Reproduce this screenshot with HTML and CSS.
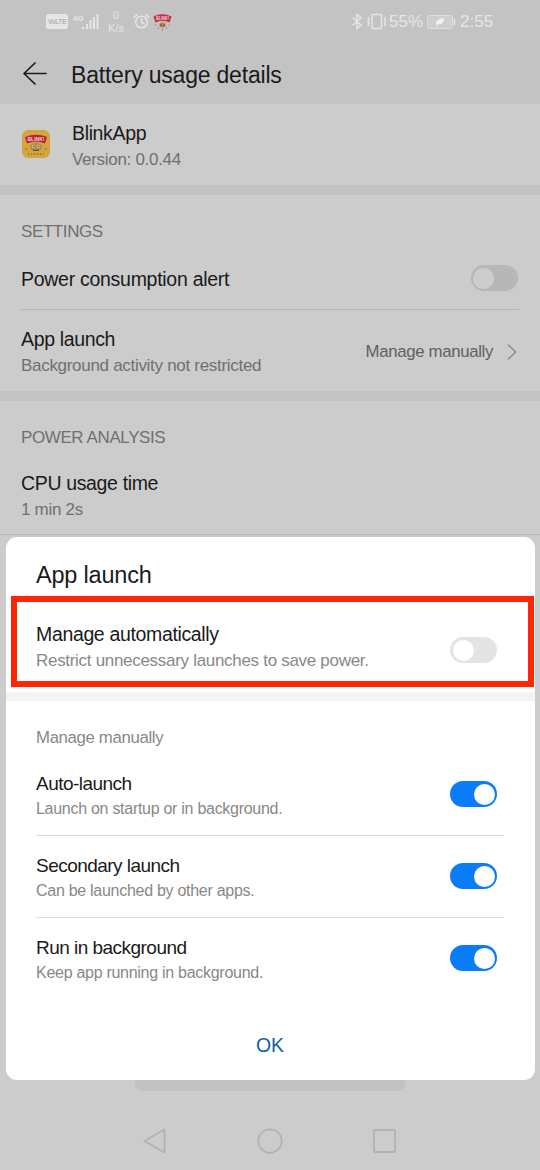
FILE: index.html
```html
<!DOCTYPE html>
<html lang="en">
<head>
<meta charset="utf-8">
<title>Battery usage details</title>
<link rel="stylesheet" href="styles.css">
</head>
<body>
<div class="screen">
  <header class="top">
    <div class="status">
      <div class="volte"><span>VoLTE</span></div>
      <svg class="signal" width="27" height="18" viewBox="0 0 27 18"><text x="0" y="7.5">4G</text><g fill="#e6e6e6"><rect x="9" y="14" width="2" height="2"/><rect x="13" y="11" width="2" height="5"/><rect x="16.500" y="7" width="2" height="9"/><rect x="20" y="4" width="2" height="12"/><rect x="23.500" y="1" width="2" height="15"/></g></svg>
      <div class="speed"><span>0</span><span>K/s</span></div>
      <svg class="alarm" width="17" height="17" viewBox="0 0 17 17" fill="none" stroke="#e6e6e6" stroke-width="1.500" stroke-linecap="round"><circle cx="8.500" cy="9" r="5.800"/><path d="M8.500 5.800V9.500L11 10.700M1.200 4.200L4 1.500M13 1.500L15.800 4.200"/></svg>
      <svg class="blink" width="19" height="18" viewBox="0 0 19 18"><path d="M0.500 3.500Q9.500-1 18.500 3.500L16.500 9.500Q9.500 6 2.500 9.500Z" fill="#c32b48"/><text class="brand" x="9.500" y="6.500" text-anchor="middle" textLength="13" lengthAdjust="spacingAndGlyphs">BLINK!</text><path d="M6.500 10.500Q9.500 8 12.500 10.500V13.500Q9.500 16 6.500 13.500Z" fill="#b88b55"/><path d="M8 11.500v1.500M11 11.500v1.500" stroke="#5b3a32" stroke-width="1.300"/><path d="M2 11.500l1 1M16 12.500l1-1M5 15l1 .5M13 15.500l1-.5M9 16.800h1" stroke="#655d5d"/></svg>
      <span class="grow"></span>
      <svg class="bt" width="12" height="17" viewBox="0 0 12 17" fill="none" stroke="#e6e6e6" stroke-width="1.500"><path d="M1.500 4.500L10 12L6 15.500V1.500L10 5L1.500 12.500"/></svg>
      <svg class="vib" width="20" height="17" viewBox="0 0 20 17" fill="none" stroke="#e6e6e6" stroke-width="1.500"><rect x="5" y="1.500" width="9.500" height="14" rx="1"/><path d="M1 4l1 2-1 2 1 2-1 3M18.500 4l-1 2 1 2-1 2 1 3"/></svg>
      <span class="stat pct">55%</span>
      <svg class="bat" width="29" height="14" viewBox="0 0 29 14"><rect x=".5" y=".5" width="25" height="13" rx="2" fill="#cecece" stroke="#dedede"/><path d="M9 10Q8 4 17 3Q17 10 10.500 9.500L9 12Z" fill="#f0f0f0"/><path d="M27.500 4v6" stroke="#e6e6e6" stroke-width="1.500"/></svg>
      <span class="stat clock">2:55</span>
    </div>
    <div class="appbar">
      <svg width="26" height="26" viewBox="0 0 26 26" fill="none" stroke="#1b1b1b" stroke-width="1.700" stroke-linecap="round" stroke-linejoin="round"><path d="M24 12.500H2M13 2L2 12.500L13 23"/></svg>
      <h1>Battery usage details</h1>
    </div>
  </header>

  <section class="app">
    <svg width="28" height="28" viewBox="0 0 28 28"><rect width="28" height="28" rx="6" fill="#d2a63d"/><path d="M3 7Q14 2.500 25 7L23 13.500Q14 9.500 5 13.500Z" fill="#bc2034"/><text class="brand big" x="14" y="10.500" text-anchor="middle" textLength="17" lengthAdjust="spacingAndGlyphs">BLINK!</text><path d="M8.500 15Q14 10.500 19.500 15V19Q14 23 8.500 19Z" fill="#ad8a49"/><circle cx="11.500" cy="16.500" r="1.700" fill="#d0bd92"/><circle cx="16.500" cy="16.500" r="1.700" fill="#d0bd92"/><path d="M11 16.500h1.500M16 16.500h1.500M11 20Q14 21 17 20" fill="none" stroke="#69502c" stroke-width="1.200"/><path d="M3 18l2 2M25 18l-2 2" stroke="#967225"/><path d="M6 24h16" stroke="#987524" stroke-width="1.300" stroke-dasharray="1.500 1.500"/></svg>
    <div class="pair"><b>BlinkApp</b><span>Version: 0.0.44</span></div>
  </section>

  <section class="settings">
    <h2>SETTINGS</h2>
    <div class="row alert"><b>Power consumption alert</b><i class="switch dim"></i></div>
    <div class="row launch">
      <div class="pair"><b>App launch</b><span>Background activity not restricted</span></div>
      <div class="value"><span>Manage manually</span><svg width="10" height="18" viewBox="0 0 10 18" fill="none" stroke="#8c8c8c" stroke-width="1.500"><path d="M1 1.500L8.500 9L1 16.500"/></svg></div>
    </div>
  </section>

  <section class="analysis">
    <h2>POWER ANALYSIS</h2>
    <div class="pair cpu"><b>CPU usage time</b><span>1 min 2s</span></div>
  </section>

  <footer class="bottom">
    <div class="tab"></div>
    <svg class="nav" width="540" height="30" viewBox="0 0 540 30" fill="none" stroke="#b2b2b2" stroke-width="1.800" stroke-linejoin="round"><path d="M164.500 3.500V26.500L144.500 15Z"/><circle cx="270" cy="15" r="11.700"/><rect x="374" y="4" width="21" height="22" rx="1"/></svg>
  </footer>

  <div class="dialog">
    <h3>App launch</h3>
    <div class="item auto"><div class="pair"><b>Manage automatically</b><span>Restrict unnecessary launches to save power.</span></div><i class="switch"></i></div>
    <div class="band"></div>
    <p class="group">Manage manually</p>
    <div class="item opt"><div class="pair"><b>Auto-launch</b><span>Launch on startup or in background.</span></div><i class="switch on"></i></div>
    <div class="item opt"><div class="pair"><b>Secondary launch</b><span>Can be launched by other apps.</span></div><i class="switch on"></i></div>
    <div class="item opt last"><div class="pair"><b>Run in background</b><span>Keep app running in background.</span></div><i class="switch on"></i></div>
    <div class="ok">OK</div>
  </div>
  <div class="highlight"></div>
</div>
</body>
</html>
```
FILE: styles.css
```css
* { box-sizing: border-box; }
body { margin: 0; font-family: "Liberation Sans", Arial, sans-serif; }
h1, h2, h3, p { margin: 0; font-weight: 400; }
b { font-weight: 400; }
svg { display: block; flex: none; }

.screen { position: relative; width: 540px; height: 1170px; overflow: hidden; background: #ccc; display: flex; flex-direction: column; color: #1a1a1a; }

.top { height: 104px; background: #c3c3c3; }
.status { height: 43px; display: flex; align-items: center; padding: 0 46px; color: #e6e6e6; }
.volte { width: 22px; height: 15px; border-radius: 2.5px; background: #e6e6e6; color: #b4b4b4; display: flex; align-items: center; justify-content: center; font-size: 7px; line-height: 11px; font-weight: 700; letter-spacing: -.5px; }
.signal { margin-left: 5px; }
.signal text { font-size: 8px; font-weight: 700; fill: #e6e6e6; }
.speed { width: 22px; margin-left: 5px; display: flex; flex-direction: column; align-items: center; font-size: 11px; line-height: 13px; }
.alarm { margin-left: 6px; }
.blink { margin-left: 3px; }
.brand { font-size: 4.5px; font-weight: 700; fill: #efd5d8; }
.brand.big { font-size: 6px; }
.grow { flex: 1; }
.vib { margin-left: 4px; }
.stat { font-size: 17px; line-height: 20px; white-space: nowrap; }
.pct { width: 35px; margin-left: 2px; }
.bat { margin-left: 3px; }
.clock { width: 34px; margin-left: 4px; }
.appbar { display: flex; align-items: center; gap: 23px; height: 62px; padding: 0 0 0 22px; }
.appbar h1 { font-size: 23px; line-height: 30px; letter-spacing: -.2px; padding-top: 1px; }

.app { height: 81px; padding: 16px 0 0 22px; display: flex; gap: 22px; }
.app svg { margin-top: 10px; }
.pair { display: flex; flex-direction: column; white-space: nowrap; }
.pair b { font-size: 19.5px; line-height: 26px; letter-spacing: -.35px; }
.pair span { font-size: 17px; line-height: 27px; letter-spacing: -.3px; color: #707070; }

.settings { height: 216px; padding: 0 21px 0 21px; border-top: 10px solid #c3c3c3; border-bottom: 10px solid #c3c3c3; }
h2 { font-size: 17px; line-height: 25px; letter-spacing: -.4px; color: #707070; padding-top: 24px; }
.row { display: flex; justify-content: space-between; }
.alert { height: 66px; align-items: center; padding: 3px 1.5px 0 0; border-bottom: 1px solid #b5b5b5; }
.alert b { font-size: 19.5px; line-height: 26px; letter-spacing: -.28px; padding-top: 2px; }
.launch { padding-top: 16px; }
.value { display: flex; align-items: center; gap: 14px; padding-right: 2px; height: 51px; font-size: 16.8px; letter-spacing: -.33px; color: #606060; }

.analysis { height: 134px; padding: 0 21px; border-bottom: 1px solid #b5b5b5; }
.cpu { padding-top: 20px; }

.bottom { height: 635px; padding-top: 545px; display: flex; flex-direction: column; align-items: center; gap: 35px; }
.tab { width: 270px; height: 11px; flex: none; border-radius: 0 0 8px 8px; background: #c2c2c2; }

.switch { width: 47px; height: 26px; border-radius: 13px; background: #e4e4e4; padding: 2.5px; display: flex; flex: none; }
.switch::before { content: ""; width: 21px; height: 21px; border-radius: 50%; background: #fff; }
.switch.dim { background: #b7b7b7; }
.switch.dim::before { background: #ccc; }
.switch.on { background: #0a7cf8; justify-content: flex-end; }

.dialog { position: absolute; left: 5.5px; top: 537px; width: 529px; height: 543px; border-radius: 11px; background: #fff; }
.dialog h3 { font-size: 23.5px; line-height: 30px; letter-spacing: -.2px; padding: 23px 0 0 30.5px; height: 61px; }
.item { display: flex; justify-content: space-between; padding-right: 7px; margin: 0 30.5px; }
.dialog .pair span { color: #888; }
.auto { height: 94px; padding-top: 23px; }
.auto .switch { margin-top: 16px; }
.band { height: 8.5px; background: #f3f3f3; }
.group { font-size: 16.8px; line-height: 26px; letter-spacing: -.35px; color: #888; padding: 24.5px 0 0 30.5px; height: 53.5px; }
.opt { height: 82px; padding-top: 17px; border-bottom: 1px solid #dcdcdc; }
.opt.last { border-color: transparent; }
.opt .pair b { font-size: 19px; line-height: 25px; letter-spacing: -.53px; }
.opt .pair span { font-size: 16px; line-height: 25px; letter-spacing: -.28px; }
.opt .switch { margin-top: 10px; }
.ok { color: #11609e; font-size: 19.4px; line-height: 26px; text-align: center; padding-top: 32px; }
.highlight { position: absolute; left: 11px; top: 595.5px; width: 522.5px; height: 91.5px; border: 6.5px solid #fd2604; }
```
